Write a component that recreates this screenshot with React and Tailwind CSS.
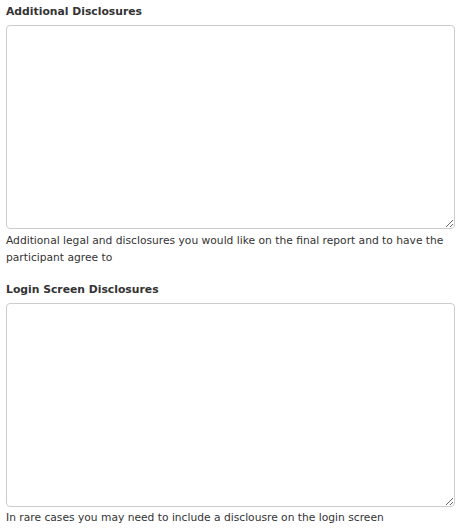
export default function App() {
  const font = { fontFamily: '"DejaVu Sans", Verdana, sans-serif' };
  return (
    <div className="w-[460px] h-[532px] bg-white text-[#333] pl-[6px] pr-[5px]" style={font}>
      <div className="pt-[2px]">
        <label className="block font-bold text-[10.8px] leading-[20px] mb-[3px] text-[#333]">Additional Disclosures</label>
        <textarea className="block w-full h-[204px] border border-[#ccc] rounded-[4px] resize-y bg-white" />
        <p className="text-[10.7px] leading-[17px] mt-[3px] text-[#333]">
          Additional legal and disclosures you would like on the final report and to have the participant agree to
        </p>
      </div>
      <div className="mt-[14px]">
        <label className="block font-bold text-[10.8px] leading-[20px] mb-[3px] text-[#333]">Login Screen Disclosures</label>
        <textarea className="block w-full h-[204px] border border-[#ccc] rounded-[4px] resize-y bg-white" />
        <p className="text-[10.7px] leading-[17px] mt-[2px] text-[#333]">
          In rare cases you may need to include a disclousre on the login screen
        </p>
      </div>
    </div>
  );
}
